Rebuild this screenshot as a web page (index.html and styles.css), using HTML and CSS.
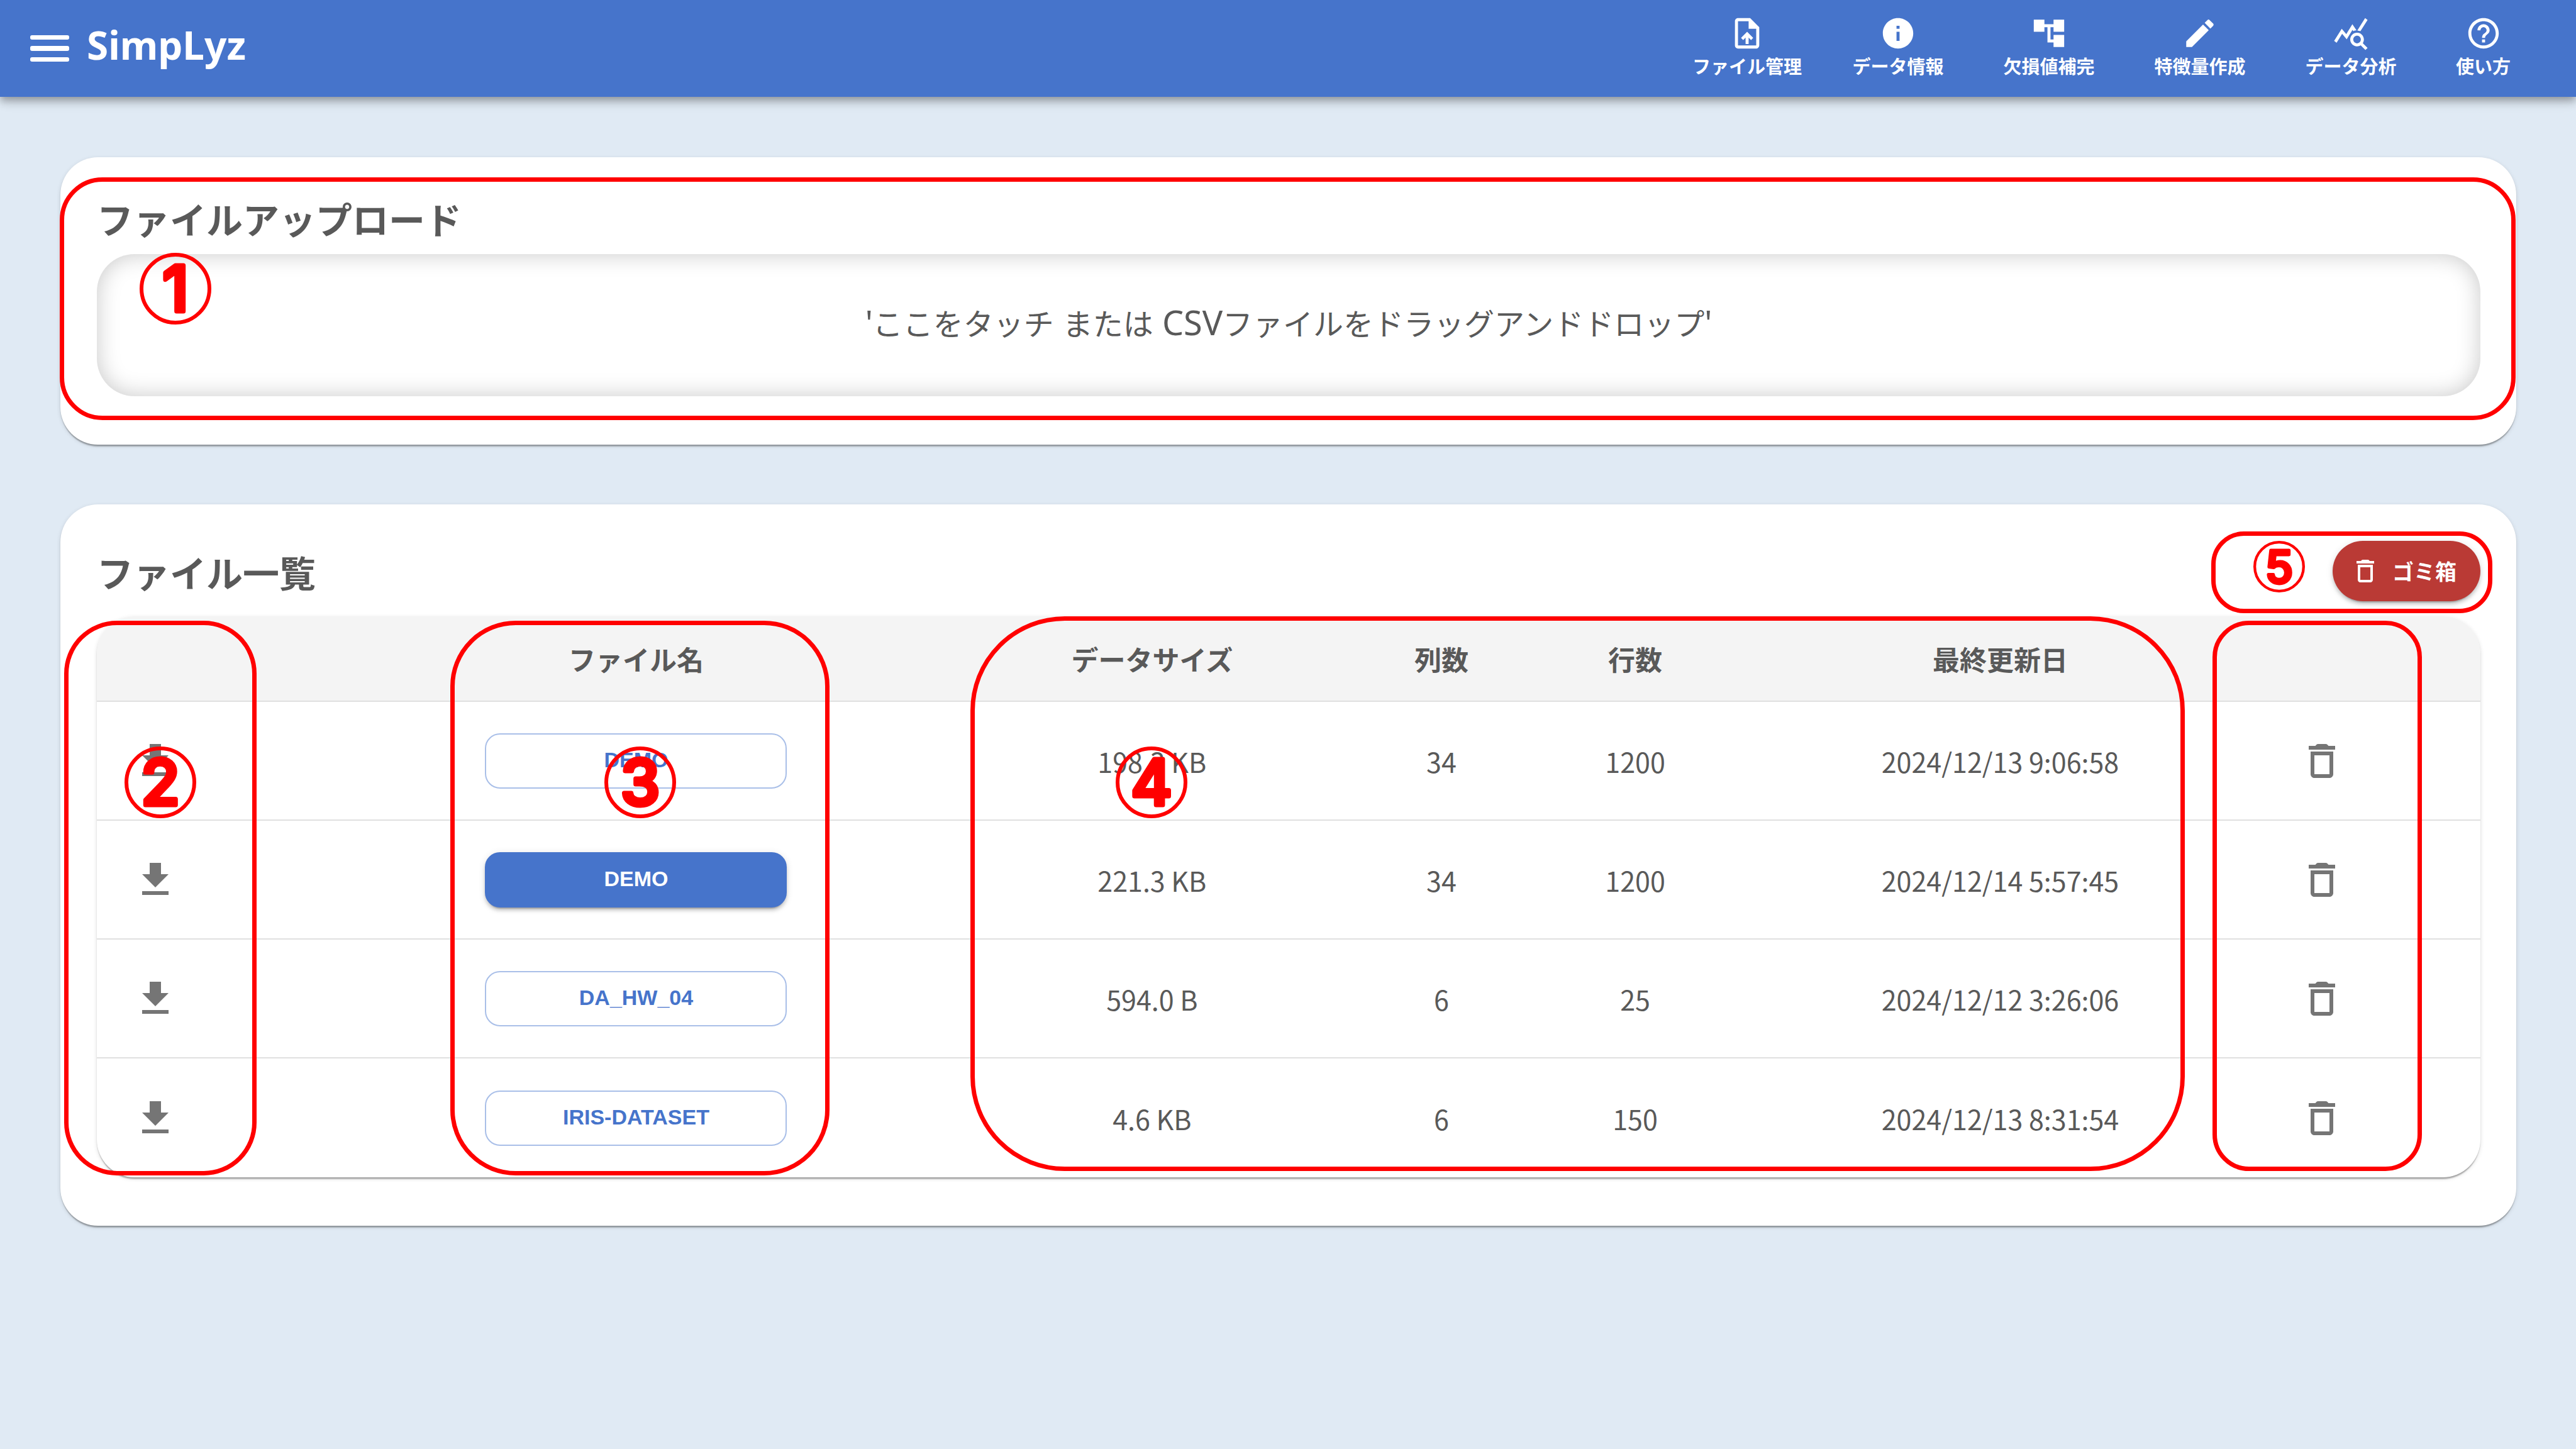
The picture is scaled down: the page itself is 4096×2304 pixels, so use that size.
FILE: index.html
```html
<!DOCTYPE html>
<html lang="ja">
<head>
<meta charset="utf-8">
<meta name="viewport" content="width=device-width, initial-scale=1">
<title>SimpLyz</title>
<link rel="stylesheet" href="styles.css">
</head>
<body>
<svg class="sprite" aria-hidden="true">
  <symbol id="i-download" viewBox="0 0 24 24"><path d="M19 9h-4V3H9v6H5l7 7zM5 18v2h14v-2z"/></symbol>
  <symbol id="i-trash" viewBox="0 0 24 24"><path d="M6 19c0 1.1.9 2 2 2h8c1.1 0 2-.9 2-2V7H6zM8 9h8v10H8zm7.5-5-.71-.71c-.18-.18-.44-.29-.7-.29H9.91c-.26 0-.52.11-.7.29L8.5 4H5v2h14V4z"/></symbol>
</svg>

<header class="appbar">
  <button class="menu" type="button" aria-label="メニュー">
    <svg viewBox="0 0 62 42" aria-hidden="true"><rect y="0" width="62" height="7" rx="3"/><rect y="17" width="62" height="8" rx="3"/><rect y="35" width="62" height="7" rx="3"/></svg>
  </button>
  <h1 class="brand">SimpLyz</h1>
  <nav class="nav">
    <a class="nav-item" href="#files"><svg class="nav-icon" viewBox="0 0 24 24"><path d="M14 2H6c-1.1 0-1.99.9-1.99 2L4 20c0 1.1.89 2 1.99 2H18c1.1 0 2-.9 2-2V8zm4 18H6V4h7v5h5zM8 15.01l1.41 1.41L11 14.84V19h2v-4.16l1.59 1.59L16 15.01 12.01 11z"/></svg><span>ファイル管理</span></a>
    <a class="nav-item" href="#info"><svg class="nav-icon" viewBox="0 0 24 24"><path d="M12 2C6.48 2 2 6.48 2 12s4.48 10 10 10 10-4.48 10-10S17.52 2 12 2m1 15h-2v-6h2zm0-8h-2V7h2z"/></svg><span>データ情報</span></a>
    <a class="nav-item" href="#impute"><svg class="nav-icon" viewBox="0 0 24 24"><path d="M22 11V3h-7v3H9V3H2v8h7V8h2v10h4v3h7v-8h-7v3h-2V8h2v3z"/></svg><span>欠損値補完</span></a>
    <a class="nav-item" href="#features"><svg class="nav-icon" viewBox="0 0 24 24"><path d="M3 17.25V21h3.75L17.81 9.94l-3.75-3.75zM20.71 7.04c.39-.39.39-1.02 0-1.41l-2.34-2.34a.996.996 0 0 0-1.41 0l-1.83 1.83 3.75 3.75z"/></svg><span>特徴量作成</span></a>
    <a class="nav-item" href="#analysis"><svg class="nav-icon" viewBox="0 0 24 24"><path d="M19.88 18.47c.44-.7.7-1.51.7-2.39 0-2.49-2.01-4.5-4.5-4.5s-4.5 2.01-4.5 4.5 2.01 4.5 4.49 4.5c.88 0 1.7-.26 2.39-.7L21.58 23 23 21.58zm-3.8.11c-1.38 0-2.5-1.12-2.5-2.5s1.12-2.5 2.5-2.5 2.5 1.12 2.5 2.5-1.12 2.5-2.5 2.5m-.36-8.5c-.74.02-1.45.18-2.1.45l-.55-.83-3.8 6.18-3.01-3.52-3.63 5.81L1 17l5-8 3 3.5L13 6zm2.59.5c-.64-.28-1.33-.45-2.05-.49L21.38 2 23 3.18z"/></svg><span>データ分析</span></a>
    <a class="nav-item nav-item-short" href="#help"><svg class="nav-icon" viewBox="0 0 24 24"><path d="M11 18h2v-2h-2zm1-16C6.48 2 2 6.48 2 12s4.48 10 10 10 10-4.48 10-10S17.52 2 12 2m0 18c-4.41 0-8-3.59-8-8s3.59-8 8-8 8 3.59 8 8-3.59 8-8 8m0-14c-2.21 0-4 1.79-4 4h2c0-1.1.9-2 2-2s2 .9 2 2c0 2-3 1.75-3 5h2c0-2.25 3-2.5 3-5 0-2.21-1.79-4-4-4"/></svg><span>使い方</span></a>
  </nav>
</header>

<main class="page">
  <section class="card">
    <h2 class="card-title upload-title">ファイルアップロード</h2>
    <label class="dropzone">
      <input class="file-input" type="file" accept=".csv">
      <span><span class="latin">'</span>ここをタッチ<span class="latin"> </span>または<span class="latin"> CSV</span>ファイルをドラッグアンドドロップ<span class="latin">'</span></span>
    </label>
    <div class="mark mark-upload"></div>
    <svg class="badge badge-1" viewBox="0 0 114 114"><circle cx="57" cy="57" r="54"/><text x="57" y="93">1</text></svg>
  </section>

  <section class="card" id="files">
    <div class="list-head">
      <h2 class="card-title">ファイル一覧</h2>
      <button class="bin-button" type="button"><svg class="bin-icon"><use href="#i-trash"/></svg>ゴミ箱</button>
      <div class="mark mark-bin"></div>
      <svg class="badge badge-5" viewBox="0 0 114 114"><circle cx="57" cy="57" r="54"/><text x="57" y="93">5</text></svg>
    </div>
    <div class="table-area">
      <div class="table-paper">
        <table class="files">
          <colgroup><col class="c-get"><col class="c-name"><col class="c-size"><col class="c-cols"><col class="c-rows"><col class="c-date"><col class="c-del"></colgroup>
          <thead>
            <tr><th></th><th scope="col">ファイル名</th><th scope="col">データサイズ</th><th scope="col">列数</th><th scope="col">行数</th><th scope="col">最終更新日</th><th></th></tr>
          </thead>
          <tbody>
            <tr>
              <td class="get"><button class="icon-button" type="button" aria-label="ダウンロード"><svg><use href="#i-download"/></svg></button></td>
              <td><button class="file-button" type="button">DEMO</button></td>
              <td>198.3 KB</td><td>34</td><td>1200</td><td>2024/12/13 9:06:58</td>
              <td class="del"><button class="icon-button" type="button" aria-label="削除"><svg><use href="#i-trash"/></svg></button></td>
            </tr>
            <tr>
              <td class="get"><button class="icon-button" type="button" aria-label="ダウンロード"><svg><use href="#i-download"/></svg></button></td>
              <td><button class="file-button selected" type="button">DEMO</button></td>
              <td>221.3 KB</td><td>34</td><td>1200</td><td>2024/12/14 5:57:45</td>
              <td class="del"><button class="icon-button" type="button" aria-label="削除"><svg><use href="#i-trash"/></svg></button></td>
            </tr>
            <tr>
              <td class="get"><button class="icon-button" type="button" aria-label="ダウンロード"><svg><use href="#i-download"/></svg></button></td>
              <td><button class="file-button" type="button">DA_HW_04</button></td>
              <td>594.0 B</td><td>6</td><td>25</td><td>2024/12/12 3:26:06</td>
              <td class="del"><button class="icon-button" type="button" aria-label="削除"><svg><use href="#i-trash"/></svg></button></td>
            </tr>
            <tr>
              <td class="get"><button class="icon-button" type="button" aria-label="ダウンロード"><svg><use href="#i-download"/></svg></button></td>
              <td><button class="file-button" type="button">IRIS-DATASET</button></td>
              <td>4.6 KB</td><td>6</td><td>150</td><td>2024/12/13 8:31:54</td>
              <td class="del"><button class="icon-button" type="button" aria-label="削除"><svg><use href="#i-trash"/></svg></button></td>
            </tr>
          </tbody>
        </table>
      </div>
      <div class="mark mark-get"></div>
      <div class="mark mark-name"></div>
      <div class="mark mark-data"></div>
      <div class="mark mark-del"></div>
      <svg class="badge badge-2" viewBox="0 0 114 114"><circle cx="57" cy="57" r="54"/><text x="57" y="93">2</text></svg>
      <svg class="badge badge-3" viewBox="0 0 114 114"><circle cx="57" cy="57" r="54"/><text x="57" y="93">3</text></svg>
      <svg class="badge badge-4" viewBox="0 0 114 114"><circle cx="57" cy="57" r="54"/><text x="57" y="93">4</text></svg>
    </div>
  </section>
</main>
</body>
</html>
```
FILE: styles.css
```css
* { box-sizing: border-box; }

:root {
  --blue: #4674cb;
  --ink: #595959;
  --mark: #ff0000;
  --raise-1: 0 5px 2px -2px rgba(0, 0, 0, .2), 0 2px 2px 0 rgba(0, 0, 0, .14), 0 2px 7px 0 rgba(0, 0, 0, .12);
  --raise-2: 0 7px 2px -5px rgba(0, 0, 0, .2), 0 5px 5px 0 rgba(0, 0, 0, .14), 0 2px 12px 0 rgba(0, 0, 0, .12);
}

body {
  margin: 0;
  min-height: 100vh;
  background: #e0eaf4;
  color: var(--ink);
  font-family: "Noto Sans CJK JP", sans-serif;
}

button {
  margin: 0;
  padding: 0;
  border: 0;
  background: none;
  color: inherit;
  font: inherit;
  cursor: pointer;
}

svg { display: block; fill: currentColor; }
.sprite { position: absolute; width: 0; height: 0; }

/* App bar */
.appbar {
  position: relative;
  display: flex;
  align-items: center;
  height: 154px;
  padding: 0 57px 0 48px;
  background: var(--blue);
  color: #fff;
  box-shadow: 0 5px 10px -2px rgba(0, 0, 0, .2), 0 10px 12px 0 rgba(0, 0, 0, .14), 0 2px 24px 0 rgba(0, 0, 0, .12);
}
.menu svg { width: 62px; height: 42px; }
.brand {
  margin: 0 auto 0 28px;
  padding-bottom: 12px;
  font: 700 62px/1 "Noto Sans", sans-serif;
}
.nav { display: flex; align-self: stretch; }
.nav-item {
  display: flex;
  flex-direction: column;
  align-items: center;
  width: 240px;
  padding-top: 24px;
  color: inherit;
  font-size: 29px;
  font-weight: 700;
  line-height: 44px;
  text-decoration: none;
}
.nav-item-short { width: 181px; }
.nav-icon { width: 58px; height: 58px; }

/* Cards */
.page {
  display: flex;
  flex-direction: column;
  gap: 95px;
  padding: 96px 95px 96px 96px;
}
.card {
  position: relative;
  padding: 58px 57px 77px 58px;
  border-radius: 60px;
  background: #fff;
  box-shadow: var(--raise-1);
}
.card-title {
  margin: 0;
  padding-bottom: 8px;
  font-size: 58px;
  font-weight: 700;
  line-height: 78px;
}
.upload-title { margin-bottom: 10px; }

.dropzone {
  display: flex;
  align-items: center;
  justify-content: center;
  height: 226px;
  padding-bottom: 10px;
  border-radius: 60px;
  box-shadow: inset 0 0 36px rgba(0, 0, 0, .22);
  font-size: 48px;
  line-height: 72px;
  cursor: pointer;
}
.latin { font-family: "Noto Sans", sans-serif; font-size: 54px; }
.file-input {
  position: absolute;
  width: 1px;
  height: 1px;
  opacity: 0;
}

/* File list */
.list-head {
  position: relative;
  display: flex;
  align-items: flex-end;
  justify-content: space-between;
  margin-bottom: 24px;
}
.bin-button {
  display: flex;
  align-items: center;
  gap: 19px;
  height: 96px;
  padding: 0 38px 0 28px;
  border-radius: 48px;
  background: #ba3a35;
  color: #fff;
  font-size: 34px;
  font-weight: 700;
  line-height: 48px;
  box-shadow: var(--raise-2);
}
.bin-icon { width: 48px; height: 48px; }

.table-area { position: relative; }
.table-paper {
  overflow: hidden;
  border-radius: 60px;
  box-shadow: var(--raise-1);
}
.files {
  width: 100%;
  table-layout: fixed;
  border-spacing: 0;
  font-size: 43px;
  line-height: 62px;
  text-align: center;
}
.c-get { width: 9.77%; }
.c-name { width: 25.71%; }
.c-size { width: 17.58%; }
.c-cols { width: 6.7%; }
.c-rows { width: 9.56%; }
.c-date { width: 21.07%; }
.c-del { width: 9.61%; }
.files th {
  height: 136px;
  padding: 0;
  border-bottom: 2px solid #e0e0e0;
  background: #f4f4f4;
  font-weight: 700;
}
.files td {
  height: 189px;
  padding: 0;
  border-bottom: 2px solid #e0e0e0;
}
.files tbody tr:last-child td { border-bottom: 0; }
.files .get { padding-left: 57px; }
.files .del { padding-left: 76px; }
.icon-button { display: block; color: #757575; }
.icon-button svg { width: 72px; height: 72px; }
.file-button {
  display: block;
  width: 480px;
  height: 88px;
  margin: 0 auto;
  padding-bottom: 4px;
  border: 2px solid #a9bfe8;
  border-radius: 24px;
  color: var(--blue);
  font: 700 34px/1 "Liberation Sans", Arial, sans-serif;
}
.file-button.selected {
  border-color: var(--blue);
  background: var(--blue);
  color: #fff;
  box-shadow: var(--raise-2);
}

/* Guide outlines and numbers laid over the screen */
.mark {
  position: absolute;
  border: 7px solid var(--mark);
  pointer-events: none;
}
.mark-upload { inset: 32px 1px 39px -1px; border-radius: 68px; }
.mark-bin { top: -15px; right: -19px; width: 447px; height: 130px; border-radius: 52px; }
.mark-get { top: 7px; bottom: 3px; left: -52px; width: 306px; border-radius: 84px; }
.mark-name { top: 7px; bottom: 3px; left: 14.83%; width: 15.92%; border-radius: 104px; }
.mark-data { top: 0; bottom: 10px; left: 36.66%; width: 50.95%; border-radius: 150px; }
.mark-del { top: 7px; bottom: 10px; left: 88.77%; width: 333px; border-radius: 58px; }

.badge {
  position: absolute;
  width: 114px;
  height: 114px;
  overflow: visible;
  pointer-events: none;
}
.badge circle { fill: none; stroke: var(--mark); stroke-width: 6px; }
.badge text {
  fill: var(--mark);
  stroke: var(--mark);
  stroke-width: 7px;
  stroke-linejoin: round;
  font-family: Inter, sans-serif;
  font-size: 100px;
  font-weight: 500;
  text-anchor: middle;
}
.badge-1 { top: 152px; left: 126px; }
.badge-2 { top: 207px; left: 44px; }
.badge-3 { top: 207px; left: 21.28%; }
.badge-4 { top: 207px; left: 42.75%; }
.badge-5 { top: 0; right: 279px; width: 82px; height: 82px; }
```
